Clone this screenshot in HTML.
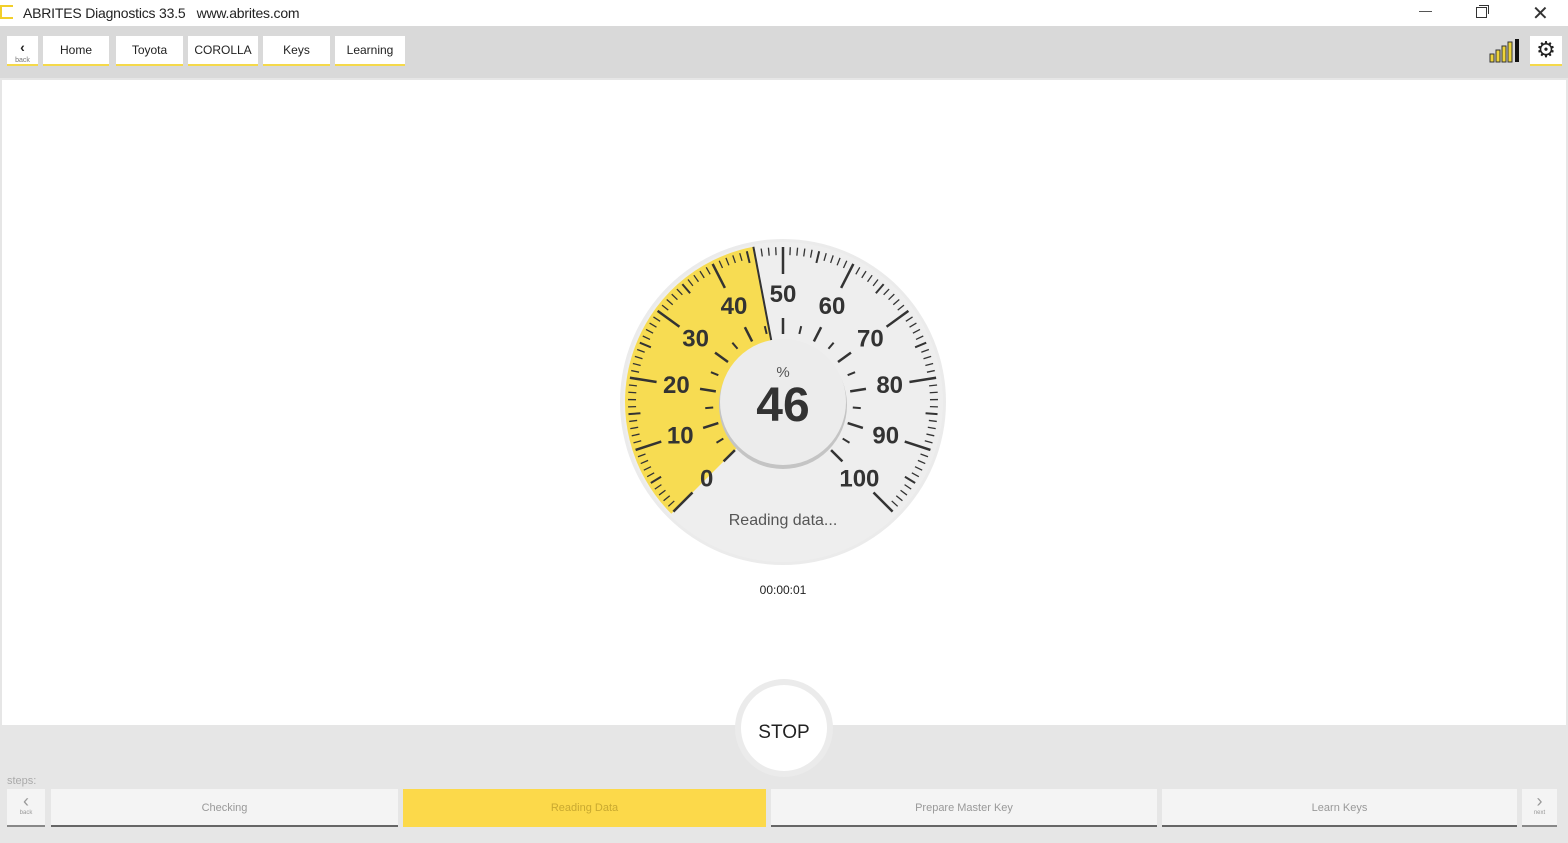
<!DOCTYPE html>
<html><head><meta charset="utf-8"><style>
body{margin:0;width:1568px;height:843px;overflow:hidden;background:#e6e6e6;font-family:"Liberation Sans",sans-serif;position:relative}
.abs{position:absolute}
.title{left:0;top:0;width:1568px;height:26px;background:#fff}
.tb{left:0;top:26px;width:1568px;height:52px;background:#d9d9d9}
.btn{position:absolute;top:36px;height:28px;background:#fff;border-bottom:2px solid #f5d94a;font-size:12px;text-align:center;line-height:29px;color:#222}
.main{left:2px;top:80px;width:1564px;height:645px;background:#fff}
.step{position:absolute;top:789px;height:36px;background:#f4f4f4;border-bottom:2px solid #666;font-size:11px;color:#999;text-align:center;line-height:38px}
</style></head><body>
<div class="abs title"></div>
<div class="abs" style="left:0;top:5px;width:13px;height:14px;border:2px solid #f2cf2a;border-right:none;box-sizing:border-box"></div>
<div class="abs" style="left:23px;top:5px;font-size:14px;color:#222;letter-spacing:-0.2px">ABRITES Diagnostics 33.5 &nbsp;&nbsp;www.abrites.com</div>
<div class="abs" style="left:1419px;top:11px;width:13px;height:1px;background:#555"></div>
<div class="abs" style="left:1476px;top:7px;width:9px;height:9px;border:1px solid #333"></div>
<div class="abs" style="left:1479px;top:5px;width:9px;height:8px;border-top:1px solid #333;border-right:1px solid #333"></div>
<div class="abs" style="left:1532px;top:1px;font-size:20px;color:#333">✕</div>
<div class="abs tb"></div>
<div class="btn" style="left:7px;width:31px;line-height:14px"><div style="font-size:14px;font-weight:bold;margin-top:4px">‹</div><div style="font-size:7px;color:#777">back</div></div>
<div class="btn" style="left:43px;width:66px">Home</div>
<div class="btn" style="left:116px;width:67px">Toyota</div>
<div class="btn" style="left:188px;width:70px">COROLLA</div>
<div class="btn" style="left:263px;width:67px">Keys</div>
<div class="btn" style="left:335px;width:70px">Learning</div>
<svg class="abs" style="left:1488px;top:38px" width="34" height="26"><g stroke="#333" stroke-width="1" fill="#eed43a"><rect x="2" y="16" width="4" height="8"/><rect x="8" y="12" width="4" height="12"/><rect x="14" y="8" width="4" height="16"/><rect x="20" y="4" width="4" height="20"/></g><rect x="27" y="1" width="4" height="23" fill="#111"/></svg>
<div class="btn" style="left:1530px;width:32px;font-size:22px;line-height:28px">⚙</div>
<div class="abs main"></div>
<svg class="abs" style="left:0;top:0" width="1568" height="843" id="g">
<circle cx="783" cy="402" r="163" fill="#ebebeb"/>
<circle cx="783" cy="402" r="160" fill="#eeeeee"/>
<path id="wedge" fill="#f7dc52"/>
<g id="ticks" stroke="#333" stroke-linecap="butt"></g>
<g id="labels" font-family="'Liberation Sans',sans-serif" font-weight="bold" font-size="24" fill="#333" text-anchor="middle"></g>
<circle cx="783" cy="405" r="64" fill="#c4c4c4"/>
<circle cx="783" cy="402" r="63" fill="#ececec"/>
<text x="783" y="377" font-size="15" fill="#555" text-anchor="middle">%</text>
<text x="783" y="421" font-size="48" font-weight="bold" fill="#333" text-anchor="middle">46</text>
<text x="783" y="525" font-size="16" fill="#555" text-anchor="middle">Reading data...</text>
<text x="783" y="594" font-size="12" fill="#222" text-anchor="middle">00:00:01</text>
<circle cx="784" cy="728" r="49" fill="#ebebeb"/>
<circle cx="784" cy="728" r="43" fill="#fff"/>
<text x="784" y="738" font-size="19" fill="#222" text-anchor="middle">STOP</text>
</svg>
<div class="abs" style="left:7px;top:775px;font-size:11px;color:#aaa">steps:</div>
<div class="step" style="left:7px;width:38px;line-height:12px;border-bottom-color:#888"><div style="font-size:18px;color:#999;margin-top:6px">‹</div><div style="font-size:6px">back</div></div>
<div class="step" style="left:51px;width:347px">Checking</div>
<div class="step" style="left:403px;width:363px;background:#fcd94a;border-bottom-color:#fcd94a;color:#c9a930">Reading Data</div>
<div class="step" style="left:771px;width:386px">Prepare Master Key</div>
<div class="step" style="left:1162px;width:355px">Learn Keys</div>
<div class="step" style="left:1522px;width:35px;line-height:12px;border-bottom-color:#888"><div style="font-size:18px;color:#999;margin-top:6px">›</div><div style="font-size:6px">next</div></div>
<script>
var cx=783,cy=402,ns="http://www.w3.org/2000/svg";
function P(a,r){var t=a*Math.PI/180;return [cx+r*Math.sin(t),cy-r*Math.cos(t)];}
function ang(v){return -135+v*2.7;}
var a0=ang(0),a1=ang(46),p0=P(a0,158),p1=P(a1,158);
document.getElementById('wedge').setAttribute('d','M'+cx+' '+cy+'L'+p0+'A158 158 0 0 1 '+p1+'Z');
var T=document.getElementById('ticks'),L=document.getElementById('labels');
function line(a,r1,r2,w){var l=document.createElementNS(ns,'line'),p=P(a,r1),q=P(a,r2);l.setAttribute('x1',p[0]);l.setAttribute('y1',p[1]);l.setAttribute('x2',q[0]);l.setAttribute('y2',q[1]);l.setAttribute('stroke-width',w);T.appendChild(l);}
for(var v=0;v<=100;v++){var a=ang(v);
 if(v%10==0){line(a,155,128,2.5);}
 else if(v%5==0){line(a,155,143,2);}
 else line(a,155,147,1.3);}
for(var v=0;v<=100;v+=5){var a=ang(v);if(v%10==0)line(a,68,84,2.5);else line(a,70,78,2);}
line(a1,158,63,2);
for(var v=0;v<=100;v+=10){var p=P(ang(v),108);var t=document.createElementNS(ns,'text');t.setAttribute('x',p[0]);t.setAttribute('y',p[1]+8);t.textContent=v;L.appendChild(t);}
</script>
</body></html>
